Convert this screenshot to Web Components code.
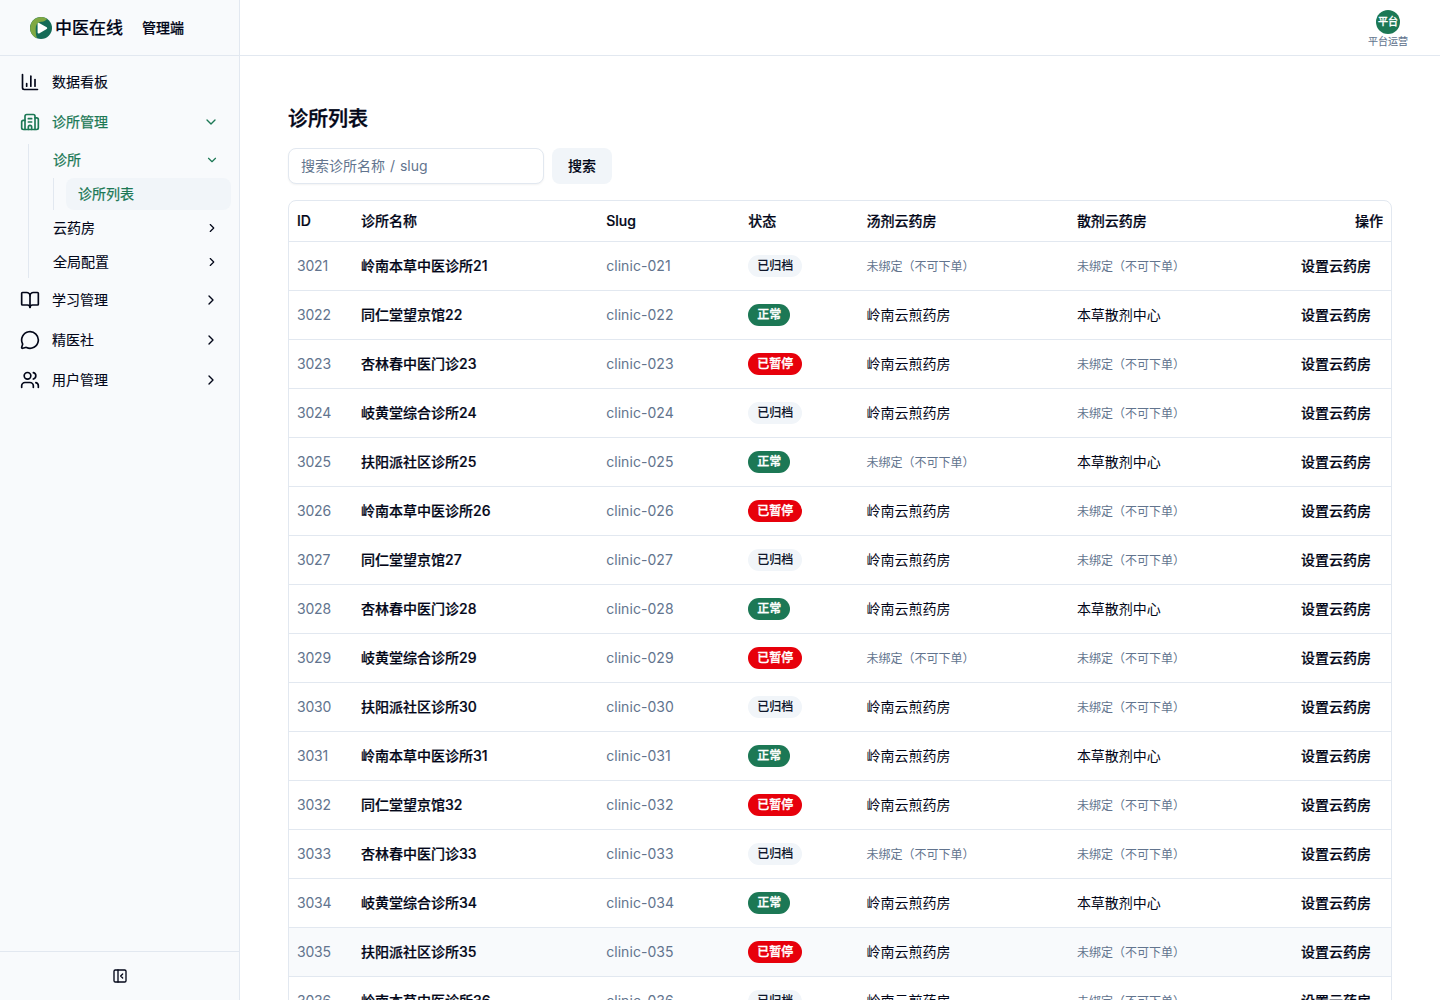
<!DOCTYPE html>
<html lang="zh-CN">
<head>
<meta charset="utf-8">
<title>诊所列表</title>
<style>
html,body{margin:0;height:100%;overflow:hidden}
body{font:14px/20px Inter,"Noto Sans CJK SC",sans-serif;color:#020618;background:#fff;--line:#e2e8f0;--muted:#62748e;--green:#1c7855;--soft:#f1f5f9;--side:#f8fafc}
</style>
</head>
<body>
<admin-app></admin-app>
<script>
const ICONS={
chart:'<path d="M3 3v16a2 2 0 0 0 2 2h16"/><path d="M18 17V9"/><path d="M13 17V5"/><path d="M8 17v-3"/>',
building:'<path d="M10 12h4"/><path d="M10 8h4"/><path d="M14 21v-3a2 2 0 0 0-4 0v3"/><path d="M6 10H4a2 2 0 0 0-2 2v7a2 2 0 0 0 2 2h16a2 2 0 0 0 2-2V9a2 2 0 0 0-2-2h-2"/><path d="M6 21V5a2 2 0 0 1 2-2h8a2 2 0 0 1 2 2v16"/>',
book:'<path d="M12 7v14"/><path d="M3 18a1 1 0 0 1-1-1V4a1 1 0 0 1 1-1h5a4 4 0 0 1 4 4 4 4 0 0 1 4-4h5a1 1 0 0 1 1 1v13a1 1 0 0 1-1 1h-6a3 3 0 0 0-3 3 3 3 0 0 0-3-3z"/>',
message:'<path d="M2.992 16.342a2 2 0 0 1 .094 1.167l-1.065 3.29a1 1 0 0 0 1.236 1.168l3.413-.998a2 2 0 0 1 1.099.092 10 10 0 1 0-4.777-4.719"/>',
users:'<path d="M16 21v-2a4 4 0 0 0-4-4H6a4 4 0 0 0-4 4v2"/><path d="M16 3.128a4 4 0 0 1 0 7.744"/><path d="M22 21v-2a4 4 0 0 0-3-3.87"/><circle cx="9" cy="7" r="4"/>',
panel:'<rect width="18" height="18" x="3" y="3" rx="2"/><path d="M9 3v18"/><path d="m16 15-3-3 3-3"/>',
down:'<path d="m6 9 6 6 6-6"/>',
right:'<path d="m9 18 6-6-6-6"/>'
};
const define=(name,render)=>customElements.define(name,class extends HTMLElement{
  connectedCallback(){
    if(this.shadowRoot)return;
    this.attachShadow({mode:'open'}).innerHTML=render(this);
  }
});
define('ui-icon',el=>{const s=el.getAttribute('size')||16;return `<style>:host{display:block;flex:none;width:${s}px;height:${s}px}svg{display:block}</style>
<svg width="${s}" height="${s}" viewBox="0 0 24 24" fill="none" stroke="currentColor" stroke-width="2" stroke-linecap="round" stroke-linejoin="round">${ICONS[el.getAttribute('name')]}</svg>`});

define('brand-logo',()=>`<style>
:host{display:flex;align-items:center;height:55px;padding-left:30px;border-bottom:1px solid var(--line)}
svg{display:block;flex:none}
b{font-size:17px;font-weight:500;margin-left:3px;-webkit-text-stroke:.15px}
span{font-weight:500;margin-left:19px;-webkit-text-stroke:.22px}
</style>
<svg width="22" height="22" viewBox="0 0 22 22"><circle cx="11" cy="11" r="11" fill="#156b57"/><path d="M7 21.250A11 11 0 1 1 17 1.750C15.500 4.500 13 4.500 10 5C6.500 6 5.500 9 5.700 13c.1 3 .3 5.500 1.300 8.250Z" fill="#7fa843"/><path d="M8.600 6.800v8.800l7.600-4.400Z" fill="#fff" stroke="#fff" stroke-width="2" stroke-linejoin="round"/></svg>
<b>中医在线</b><span>管理端</span>`);

define('nav-item',el=>{const sub=el.hasAttribute('sub'),leaf=el.hasAttribute('leaf'),ic=el.getAttribute('icon'),ch=el.getAttribute('chevron');return `<style>
:host{display:flex;align-items:center;box-sizing:border-box;height:${sub?32:36}px;padding:0 12px;border-radius:8px}
:host([active]){color:var(--green)}
:host([leaf]){background:var(--soft)}
.t{flex:1;-webkit-text-stroke:.12px;${ic?'margin-left:12px;':''}}
:host([active]) .t{-webkit-text-stroke:.25px}
</style>${ic?`<ui-icon name="${ic}" size="20"></ui-icon>`:''}<span class="t"><slot></slot></span>${ch?`<ui-icon name="${ch}" size="${sub?14:16}"></ui-icon>`:''}`});

define('nav-group',el=>`<style>:host{display:flex;flex-direction:column;gap:2px;border-left:1px solid var(--line);padding-left:12px;margin-left:${el.hasAttribute('inner')?12:20}px}</style><slot></slot>`);

define('side-bar',()=>`<style>
:host{display:flex;flex-direction:column;box-sizing:border-box;width:240px;height:100%;flex:none;background:var(--side);border-right:1px solid var(--line)}
nav{flex:1;display:flex;flex-direction:column;gap:4px;padding:8px}
footer{height:48px;border-top:1px solid var(--line);display:flex;align-items:center;justify-content:center}
</style>
<brand-logo></brand-logo>
<nav>
<nav-item icon="chart">数据看板</nav-item>
<nav-item icon="building" chevron="down" active>诊所管理</nav-item>
<nav-group>
<nav-item sub chevron="down" active>诊所</nav-item>
<nav-group inner><nav-item sub leaf active>诊所列表</nav-item></nav-group>
<nav-item sub chevron="right">云药房</nav-item>
<nav-item sub chevron="right">全局配置</nav-item>
</nav-group>
<nav-item icon="book" chevron="right">学习管理</nav-item>
<nav-item icon="message" chevron="right">精医社</nav-item>
<nav-item icon="users" chevron="right">用户管理</nav-item>
</nav>
<footer><ui-icon name="panel" size="16"></ui-icon></footer>`);

define('top-bar',()=>`<style>
:host{display:flex;justify-content:flex-end;height:55px;flex:none;border-bottom:1px solid var(--line);padding-right:32px}
div{display:flex;flex-direction:column;align-items:center;padding-top:10px}
i{width:24px;height:24px;border-radius:50%;background:var(--green);color:#fff;font:500 10px/22px Inter,"Noto Sans CJK SC",sans-serif;text-align:center;-webkit-text-stroke:.3px}
span{font-size:10px;line-height:14px;color:var(--muted);-webkit-text-stroke:.1px}
</style><div><i>平台</i><span>平台运营</span></div>`);

define('search-form',()=>`<style>
:host{display:flex;gap:8px}
input{box-sizing:border-box;width:256px;height:36px;border:1px solid var(--line);border-radius:8px;padding:0 12px 2px;font:inherit;word-spacing:1px;background:#fff;box-shadow:0 1px 2px rgba(0,0,0,.05);outline:0}
input::placeholder{color:var(--muted);opacity:1}
button{width:60px;height:36px;border:0;border-radius:8px;background:var(--soft);font:inherit;font-weight:500;color:inherit;padding:0;-webkit-text-stroke:.15px}
</style><input placeholder="搜索诊所名称 / slug"><button>搜索</button>`);

define('status-badge',el=>{const [bg,fg]={'正常':['var(--green)','#fff'],'已暂停':['#e7000b','#fff'],'已归档':['var(--soft)','#0f172b']}[el.getAttribute('value')];return `<style>
:host{display:inline-block;box-sizing:border-box;height:22px;padding:0 9px;border-radius:11px;background:${bg};color:${fg};font-size:12px;line-height:22px;font-weight:500;-webkit-text-stroke:${fg==='#fff'?.35:.1}px}
</style>${el.getAttribute('value')}`});

define('clinic-table',()=>{
const names=['岭南本草中医诊所','同仁堂望京馆','杏林春中医门诊','岐黄堂综合诊所','扶阳派社区诊所'];
const states=['已归档','正常','已暂停'];
const none='<small>未绑定（不可下单）</small>';
let rows='';
for(let n=21;n<=36;n++){
  const i=n-21;
  rows+=`<div class="row${n===35?' hover':''}"><span class="m">30${n}</span><span class="s">${names[i%5]}${n}</span><span class="m">clinic-0${n}</span><span><status-badge value="${states[i%3]}"></status-badge></span><span>${i%4?'岭南云煎药房':none}</span><span>${i%3===1?'本草散剂中心':none}</span><span class="a s">设置云药房</span></div>`;
}
return `<style>
:host{display:block;border:1px solid var(--line);border-radius:8px;overflow:hidden}
.row{display:grid;grid-template-columns:64px 245.200px 142px 118.300px 210.400px 1fr 116px;align-items:center;height:48px;border-bottom:1px solid var(--line)}
.row>span{padding:0 8px;white-space:nowrap}
.head{height:40px}
.hover{background:#f8fafc}
.m{color:var(--muted);letter-spacing:-.2px}
.m:nth-child(3){letter-spacing:.05px}
.s,.head{font-weight:500}
.s,.head>span{-webkit-text-stroke:.22px}
.row>.a{padding-right:20px;text-align:right}
.head>.a{padding-right:8px}
small{font-size:12px;color:var(--muted)}
</style><div class="row head"><span>ID</span><span>诊所名称</span><span>Slug</span><span>状态</span><span>汤剂云药房</span><span>散剂云药房</span><span class="a">操作</span></div>${rows}`});

define('clinic-page',()=>`<style>
:host{display:flex;flex-direction:column;gap:16px;padding:48px}
h1{margin:0;padding-top:2px;font-size:20px;line-height:26px;font-weight:500;-webkit-text-stroke:.4px}
</style><h1>诊所列表</h1><search-form></search-form><clinic-table></clinic-table>`);

define('admin-app',()=>`<style>
:host{display:flex;height:100vh;overflow:hidden}
main{flex:1;display:flex;flex-direction:column;min-width:0}
</style><side-bar></side-bar><main><top-bar></top-bar><clinic-page></clinic-page></main>`);
</script>
</body>
</html>
